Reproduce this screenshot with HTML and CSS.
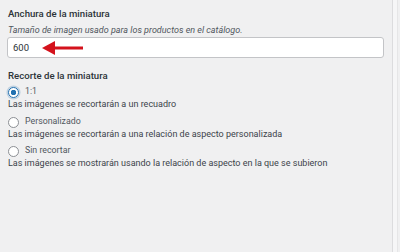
FILE: index.html
```html
<!DOCTYPE HTML>
<html lang="es">
  <head>
    <title>Miniaturas</title>
    <meta charset="utf-8">
    <link rel="stylesheet" href="styles.css">
  </head>
  <body>

  <div class="layout">
    <div class="panel">

      <div class="field">
        <div class="field-title">Anchura de la miniatura</div>
        <div class="field-help">Tamaño de imagen usado para los productos en el catálogo.</div>
        <div class="input-wrap">
          <input class="text-input" type="text" value="600">
          <svg class="arrow" width="44" height="14" viewBox="0 0 44 14">
            <polygon points="0,7 13,0 13,14" fill="#d4121c"/>
            <rect x="11" y="5.5" width="30" height="3" fill="#d4121c"/>
          </svg>
        </div>
      </div>

      <div class="field">
        <div class="field-title crop-title">Recorte de la miniatura</div>

        <div class="option">
          <div class="option-row">
            <span class="radio checked"></span>
            <span class="option-label">1:1</span>
          </div>
          <div class="option-desc">Las imágenes se recortarán a un recuadro</div>
        </div>

        <div class="option">
          <div class="option-row">
            <span class="radio"></span>
            <span class="option-label">Personalizado</span>
          </div>
          <div class="option-desc">Las imágenes se recortarán a una relación de aspecto personalizada</div>
        </div>

        <div class="option">
          <div class="option-row">
            <span class="radio"></span>
            <span class="option-label">Sin recortar</span>
          </div>
          <div class="option-desc">Las imágenes se mostrarán usando la relación de aspecto en la que se subieron</div>
        </div>
      </div>

    </div>
    <div class="side"></div>
  </div>

  </body>
</html>
```

FILE: styles.css
```css
html {
  height: 100%;
}
body {
  margin: 0;
  padding: 0;
  height: 100%;
  background: #f0f0f1;
  color: #3c434a;
  font-family: Roboto, sans-serif;
  font-size: 9px;
}

.layout {
  display: flex;
  height: 100%;
}

.panel {
  width: 384px;
  padding: 7px 0 0 8px;
  border-right: 1px solid #dcdcde;
}

.side {
  flex: 1;
  background: #f6f6f7;
  border-right: 1px solid #e6e6e7;
  margin-right: 2px;
}

.field-title {
  font-size: 9.6px;
  font-weight: 500;
  color: #2c3338;
  line-height: 13px;
}

.field-help {
  font-style: italic;
  font-size: 9px;
  color: #50575e;
  margin-top: 4px;
  line-height: 12px;
}

.input-wrap {
  position: relative;
  margin-top: 1px;
  margin-left: -1px;
}

.text-input {
  display: block;
  box-sizing: border-box;
  width: 377px;
  height: 21px;
  margin: 0;
  padding: 0 5px;
  border: 1px solid #c3c4c7;
  border-radius: 3px;
  background: #fff;
  font-family: Roboto, sans-serif;
  font-size: 9.5px;
  color: #2c3338;
}

.arrow {
  position: absolute;
  left: 35px;
  top: 4px;
}

.crop-title {
  margin-top: 11px;
}

.option {
  margin-top: 4px;
}

.option + .option {
  margin-top: 6px;
}

.option:last-child {
  margin-top: 5px;
}

.option-row {
  display: flex;
  align-items: center;
  gap: 6px;
  height: 12px;
}

.radio {
  box-sizing: border-box;
  width: 11px;
  height: 11px;
  border-radius: 50%;
  border: 1px solid #8c8f94;
  background: #fff;
}

.radio.checked {
  border: 1.5px solid #2271b1;
  background: radial-gradient(circle, #2271b1 0 2.5px, #fff 3px);
  box-shadow: 0 0 0 1.5px rgba(34, 113, 177, 0.25);
}

.option-label {
  font-size: 8.8px;
  color: #50575e;
  margin-top: -2px;
}

.option-desc {
  font-size: 9px;
  line-height: 12px;
}
```
